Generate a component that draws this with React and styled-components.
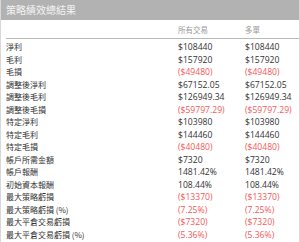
import React from "react";
import styled, { createGlobalStyle } from "styled-components";

const Global = createGlobalStyle`
  html, body { margin: 0; padding: 0; background: #fff; }
  body { font-family: "Open Sans", "Noto Sans CJK TC", sans-serif; }
`;

const Panel = styled.div`
  width: 300px;
  height: 242px;
  box-sizing: border-box;
  border-left: 1px solid #d8d8d8;
  border-right: 1px solid #d8d8d8;
  overflow: hidden;
  background: #fff;
`;

const TitleBar = styled.div`
  height: 20px;
  background: #b2b2b2;
  color: #f4f4f4;
  font-size: 10px;
  line-height: 20px;
  padding-left: 5px;
  font-family: "Noto Sans CJK TC", sans-serif;
`;

const Table = styled.div`
  display: grid;
  grid-template-columns: 172px 67px 1fr;
  padding-left: 5px;
`;

const HeadCell = styled.div`
  height: 18px;
  line-height: 19px;
  font-size: 7.5px;
  color: #9a9a9a;
  border-bottom: 1px solid #b8b8b8;
  font-family: "Noto Sans CJK TC", sans-serif;
`;

const Spacer = styled.div`
  grid-column: 1 / -1;
  height: 2px;
`;

const Cell = styled.div`
  height: 12.5px;
  line-height: 12.5px;
  font-size: ${(p) => (p.$label ? "8px" : "8.6px")};
  color: ${(p) => (p.$neg ? "#f25a5a" : "#333")};
  white-space: nowrap;
  font-family: ${(p) =>
    p.$label
      ? '"Noto Sans CJK TC", sans-serif'
      : '"Open Sans", "Noto Sans CJK TC", sans-serif'};
`;

const rows = [
  ["淨利", "$108440"],
  ["毛利", "$157920"],
  ["毛損", "($49480)", true],
  ["調整後淨利", "$67152.05"],
  ["調整後毛利", "$126949.34"],
  ["調整後毛損", "($59797.29)", true],
  ["特定淨利", "$103980"],
  ["特定毛利", "$144460"],
  ["特定毛損", "($40480)", true],
  ["帳戶所需金額", "$7320"],
  ["帳戶報酬", "1481.42%"],
  ["初始資本報酬", "108.44%"],
  ["最大策略虧損", "($13370)", true],
  ["最大策略虧損 (%)", "(7.25%)", true],
  ["最大平倉交易虧損", "($7320)", true],
  ["最大平倉交易虧損 (%)", "(5.36%)", true],
];

export default function App() {
  return (
    <>
      <Global />
      <Panel>
        <TitleBar>策略績效總結果</TitleBar>
        <Table>
          <HeadCell />
          <HeadCell>所有交易</HeadCell>
          <HeadCell>多單</HeadCell>
          <Spacer />
          {rows.map(([label, value, neg]) => (
            <React.Fragment key={label}>
              <Cell $label>{label}</Cell>
              <Cell $neg={neg}>{value}</Cell>
              <Cell $neg={neg}>{value}</Cell>
            </React.Fragment>
          ))}
        </Table>
      </Panel>
    </>
  );
}
